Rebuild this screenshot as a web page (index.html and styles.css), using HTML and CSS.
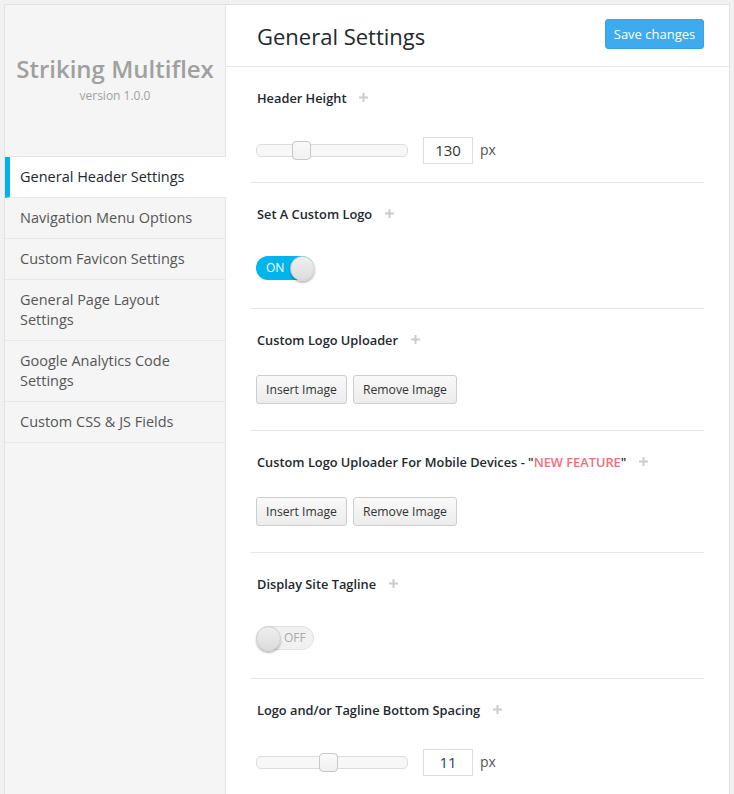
FILE: index.html
```html
<!DOCTYPE html>
<html>
<head>
<meta charset="utf-8">
<link rel="stylesheet" href="styles.css">
</head>
<body>
<div class="frame">
  <aside class="sidebar">
    <div class="brand">
      <div class="brand-name">Striking Multiflex</div>
      <div class="brand-ver">version 1.0.0</div>
    </div>
    <ul class="nav">
      <li class="nav-item active">General Header Settings</li>
      <li class="nav-item">Navigation Menu Options</li>
      <li class="nav-item">Custom Favicon Settings</li>
      <li class="nav-item">General Page Layout Settings</li>
      <li class="nav-item">Google Analytics Code Settings</li>
      <li class="nav-item">Custom CSS &amp; JS Fields</li>
    </ul>
  </aside>
  <main class="main">
    <header class="head">
      <h1 class="title">General Settings</h1>
      <button class="save">Save changes</button>
    </header>
    <div class="sections">
      <section class="sec sec-first">
        <div class="label">Header Height <svg class="plus" width="9" height="9" viewBox="0 0 9 9"><rect x="3.5" y="0" width="2" height="9"/><rect x="0" y="3.5" width="9" height="2"/></svg></div>
        <div class="row range-row">
          <div class="track"><div class="knob" style="left:35px"></div></div>
          <div class="num">130</div>
          <span class="unit">px</span>
        </div>
      </section>
      <section class="sec sec-toggle">
        <div class="label">Set A Custom Logo <svg class="plus" width="9" height="9" viewBox="0 0 9 9"><rect x="3.5" y="0" width="2" height="9"/><rect x="0" y="3.5" width="9" height="2"/></svg></div>
        <div class="row toggle on"><span class="tg-text">ON</span><span class="tg-knob"></span></div>
      </section>
      <section class="sec sec-btn">
        <div class="label">Custom Logo Uploader <svg class="plus" width="9" height="9" viewBox="0 0 9 9"><rect x="3.5" y="0" width="2" height="9"/><rect x="0" y="3.5" width="9" height="2"/></svg></div>
        <div class="row btns"><button class="btn">Insert Image</button><button class="btn">Remove Image</button></div>
      </section>
      <section class="sec sec-btn">
        <div class="label">Custom Logo Uploader For Mobile Devices - "<span class="new">NEW FEATURE</span>" <svg class="plus" width="9" height="9" viewBox="0 0 9 9"><rect x="3.5" y="0" width="2" height="9"/><rect x="0" y="3.5" width="9" height="2"/></svg></div>
        <div class="row btns"><button class="btn">Insert Image</button><button class="btn">Remove Image</button></div>
      </section>
      <section class="sec sec-toggle">
        <div class="label">Display Site Tagline <svg class="plus" width="9" height="9" viewBox="0 0 9 9"><rect x="3.5" y="0" width="2" height="9"/><rect x="0" y="3.5" width="9" height="2"/></svg></div>
        <div class="row toggle off"><span class="tg-knob"></span><span class="tg-text">OFF</span></div>
      </section>
      <section class="sec sec-first">
        <div class="label">Logo and/or Tagline Bottom Spacing <svg class="plus" width="9" height="9" viewBox="0 0 9 9"><rect x="3.5" y="0" width="2" height="9"/><rect x="0" y="3.5" width="9" height="2"/></svg></div>
        <div class="row range-row">
          <div class="track"><div class="knob" style="left:62px"></div></div>
          <div class="num num-focus">11</div>
          <span class="unit">px</span>
        </div>
      </section>
    </div>
  </main>
</div>
</body>
</html>
```
FILE: styles.css
```css
* { box-sizing: border-box; }
html, body { margin: 0; padding: 0; }
body {
  background: #f1f1f1;
  font-family: "Open Sans", "Liberation Sans", sans-serif;
  color: #23282d;
}
.frame {
  margin: 4px 4px 0 4px;
  border: 1px solid #e2e2e2;
  border-bottom: none;
  display: flex;
  min-height: 820px;
  background: #f5f5f5;
}
.sidebar {
  width: 221px;
  flex: none;
  background: #f5f5f5;
  border-right: 1px solid #e6e6e6;
}
.brand {
  height: 152px;
  text-align: center;
  padding-top: 49px;
  border-bottom: 1px solid #e8e8e8;
}
.brand-name {
  font-size: 24px;
  font-weight: 600;
  color: #a0a0a0;
  line-height: 30px;
}
.brand-ver {
  font-size: 12px;
  color: #a0a0a0;
  line-height: 18px;
  margin-top: 3px;
}
.nav { list-style: none; margin: 0; padding: 0; }
.nav-item {
  font-size: 14.5px;
  line-height: 20px;
  padding: 10px 20px 10px 15px;
  color: #555;
  border-bottom: 1px solid #e8e8e8;
}
.nav-item.active {
  background: #fff;
  color: #23282d;
  border-left: 5px solid #00b4eb;
  padding-left: 10px;
  margin-right: -1px;
  position: relative;
}
.main {
  flex: 1;
  background: #fff;
  border-right: 1px solid #e2e2e2;
  margin-right: -1px;
}
.head {
  height: 61px;
  border-bottom: 1px solid #e8e8e8;
  display: flex;
  align-items: center;
  justify-content: space-between;
  padding: 0 25px 0 31px;
  box-sizing: content-box;
}
.title {
  margin: 0;
  font-size: 22px;
  font-weight: 400;
  color: #23282d;
  line-height: 30px;
}
.save {
  width: 99px;
  height: 30px;
  background: #3eabee;
  border: 1px solid #35a3e8;
  border-radius: 3px;
  color: #fff;
  font-family: inherit;
  font-size: 13px;
  padding: 0;
  position: relative;
  top: -2px;
}
.sections { margin: 0 25px; }
.sec {
  border-bottom: 1px solid #e6e6e6;
  padding: 22px 0 0 6px;
}
.label {
  font-size: 12.8px;
  font-weight: 600;
  line-height: 18px;
  color: #23282d;
  display: flex;
  align-items: center;
}
.new { color: #ec6f7a; }
.plus { fill: #cccccc; margin-left: 13px; position: relative; top: -1px; }
.row { display: flex; align-items: center; }
.sec-first { padding-bottom: 18px; }
.sec-first .row { margin-top: 30px; height: 27px; }
.sec-toggle { padding-bottom: 28px; }
.sec-toggle .row { margin-top: 33px; }
.sec-btn { padding-bottom: 26px; }
.sec-btn .row { margin-top: 26px; }

.track {
  width: 152px;
  height: 13px;
  border: 1px solid #dcdcdc;
  border-radius: 5px;
  background: #f7f7f7;
  position: relative;
  margin-left: -1px;
}
.knob {
  position: absolute;
  top: -4px;
  width: 19px;
  height: 19px;
  border: 1px solid #c8c8c8;
  border-radius: 4px;
  background: linear-gradient(#fafafa, #f0f0f0);
}
.num {
  width: 50px;
  height: 27px;
  margin-left: 15px;
  border: 1px solid #dddddd;
  font-size: 15px;
  line-height: 25px;
  text-align: center;
  color: #333;
}
.num-focus { color: #2a3f78; }
.unit { font-size: 14px; color: #555; margin-left: 7px; margin-top: -2px; }

.toggle {
  width: 58px;
  height: 24px;
  border-radius: 12px;
  position: relative;
  margin-left: -1px;
  font-size: 12px;
}
.toggle.on { background: #00b4ec; color: #fff; }
.toggle.off { background: #f1f1f1; border: 1px solid #e0e0e0; color: #aaa; }
.tg-knob {
  position: absolute;
  top: 0;
  width: 25px;
  height: 25px;
  border-radius: 50%;
  background: linear-gradient(#efefef, #dcdcdc);
  border: 1px solid #cfcfcf;
  box-shadow: 0 2px 2px rgba(0,0,0,0.25);
}
.toggle.on .tg-knob { right: -1px; }
.toggle.off .tg-knob { left: -1px; top: -1px; }
.tg-text { line-height: 24px; }
.toggle.on .tg-text { margin-left: 10px; }
.toggle.off .tg-text { margin-left: 27px; line-height: 22px; }

.btns { gap: 6px; }
.btn {
  height: 29px;
  padding: 0 9px;
  border: 1px solid #cdcdcd;
  border-radius: 3px;
  background: linear-gradient(#f9f9f9, #ececec);
  font-family: inherit;
  font-size: 12.2px;
  color: #333;
  margin: 0;
}
.btn:first-child { margin-left: -1px; }
```
